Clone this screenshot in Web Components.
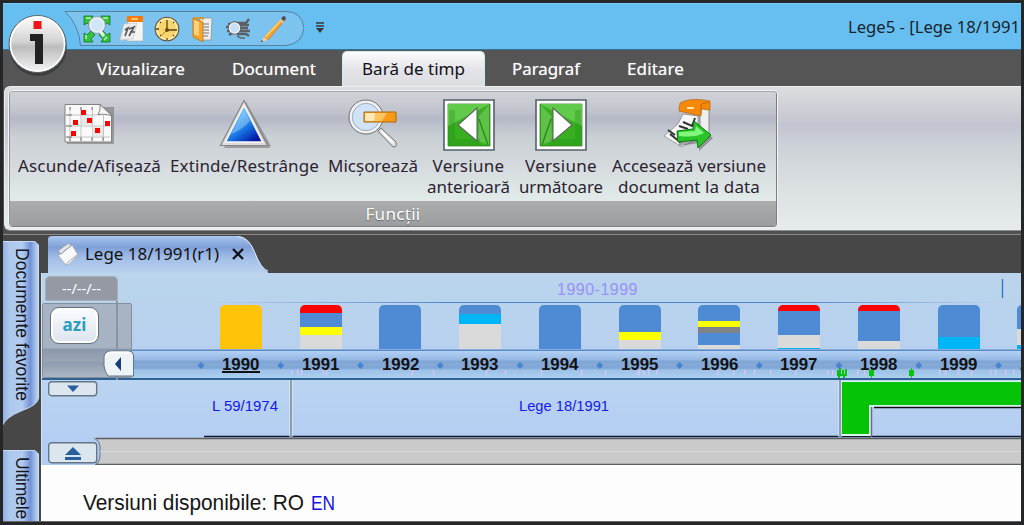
<!DOCTYPE html>
<html lang="ro">
<head>
<meta charset="utf-8">
<title>Lege5</title>
<style>
html,body{margin:0;height:100%;overflow:hidden;background:#222}
body{font-family:"Noto Sans","Open Sans",sans-serif}
</style>
</head>
<body>
<app-window></app-window>
<script>
const define=(name,html,after)=>customElements.define(name,class extends HTMLElement{
  connectedCallback(){
    if(this.shadowRoot)return;
    const t=document.createElement('template');
    t.innerHTML=typeof html==='function'?html(this):html;
    this.attachShadow({mode:'open'}).append(t.content.cloneNode(true));
    if(after)after(this);
  }
});

/* Label that takes up the given length: a short text is tracked out, a long one is condensed. */
define('fit-label',`<style>:host{display:block;white-space:pre;line-height:inherit}span{display:inline-block;transform-origin:0 0}</style><span><slot></slot></span>`,el=>{
  const s=el.shadowRoot.querySelector('span'),r=s.getBoundingClientRect(),w=+el.getAttribute('w'),v=el.hasAttribute('vertical');
  const len=v?r.height:r.width;
  if(len>w&&!v){
    s.style.transform=`scaleX(${(w/len).toFixed(4)})`;
    el.style.width=w+'px';
  }else s.style.letterSpacing=((w-len)/el.textContent.length).toFixed(3)+'px';
});

const ICONS={
fit:[26,26,`<g stroke="#0a6a12" stroke-width=".7"><path fill="#35c23c" d="M0 0h9l-2 3 4 4-4 4-4-4-3 2zM26 0h-9l2 3-4 4 4 4 4-4 3 2zM0 26h9l-2-3 4-4-4-4-4 4-3-2zM26 26h-9l2-3-4-4 4-4 4 4 3-2z"/></g><path d="M2 2h5M19 2h5M2 19v4M20 24l3-3" stroke="#baf5b3" stroke-width="1.5"/><circle cx="13" cy="9" r="7.3" fill="#cfe5f8" stroke="#e7edf1" stroke-width="2.4"/><circle cx="13" cy="9" r="8.4" fill="none" stroke="#66747e" stroke-width=".6"/><path d="M16 15l4 5" stroke="#eee" stroke-width="3"/>`],
cal:[26,26,`<path d="M9 5h15v20H8z" fill="#f5f5f5" stroke="#b5b5b5" stroke-width=".7"/><path fill="#f47b0a" d="M8 0h16v6H8z"/><path d="M12 3h7" stroke="#fff2b8" stroke-width="1.2"/><path d="M5 8l13-1-4 16-13 1z" fill="#ececec" stroke="#c8c8c8" stroke-width=".7"/><path d="M6 14l3-2-3 8M10 13l5-2-5 9M11 16h5" fill="none" stroke="#555" stroke-width="1.6"/>`],
clock:[26,26,`<circle cx="13" cy="13" r="11.8" fill="#f9d56e" stroke="#5f5540" stroke-width="1.1"/><circle cx="13" cy="13" r="10" fill="none" stroke="#fce9a9" stroke-width="1.6"/><g stroke="#56431d" stroke-width="1.3"><path d="M13 4v11M13 14h10M13 22v2M2 13h3M6 6l1 1M20 6l-1 1M6 20l1-1M20 20l-1-1"/></g><path d="M13 14l-6 6" stroke="#c08b28"/><circle cx="13" cy="14" r="2" fill="#694a0c"/>`],
folder:[26,26,`<g transform="translate(3 1)"><path d="M7 1h12l-1 22H7z" fill="#eee" stroke="#8b8b8b" stroke-width=".7"/><path d="M9 7h7M9 10h7M9 13h7M9 16h7M9 19h6" stroke="#777" stroke-width="1"/><path fill="#f6a42c" stroke="#bb6e0a" stroke-width=".7" d="M0 1l10 4v20L0 20z"/><path d="M1 3l5 2v14l-5-2z" fill="#fbd17a"/><path d="M0 1h10v2" stroke="#e98a0e" fill="none" stroke-width="1.5"/></g>`],
search:[26,26,`<path d="M1 11h7M3 8h5M2 15h6M4 19l5-3M8 7h13l3-4M14 9h10M15 12h8M15 15h10M12 18h9l3 2" stroke="#5d6062" stroke-width="2.4" fill="none"/><path d="M12 20l4 2h4" stroke="#666" stroke-width="1.4" fill="none"/><circle cx="9.500" cy="12" r="5.200" fill="#c9e0f4" stroke="#eceeee" stroke-width="1.600"/><circle cx="9.500" cy="12" r="6.300" fill="none" stroke="#55595c" stroke-width=".8"/>`],
pencil:[28,28,`<path d="M4 22L22 3l3 2L8 25z" fill="#f7a72e" stroke="#c27513" stroke-width=".7"/><path d="M5 22L22 4" stroke="#fddb8d" stroke-width="1.400"/><path d="M4 22L1 27l7-2z" fill="#eccfa2"/><path d="M1 27l1-2 1 1.500z" fill="#222"/><path d="M21 4l2-3q3 0 3 3l-2 2z" fill="#49545c"/><path d="M20 5l4 3" stroke="#cfcfcf" stroke-width="1.500"/>`],
sheet:[52,52,`<g transform="translate(-1 0)"><path d="M4 8H51V45H4z" fill="#666" opacity=".5"/><path d="M2 5.500h35l11.500 10.500v27H2z" fill="#fafafa" stroke="#828282"/><path d="M7 8v34M18 8v34M29.500 8v34M40.500 16v26M4 16h34M4 27h43M4 38h43" stroke="#c4c4c4" stroke-width="1"/><path d="M7 8v3M18 8v3M29 8v3M7 38v4M18 38v4M29 38v4M40 38v4M3 16h6M3 27h6M3 38h6" stroke="#777" stroke-width="1"/><path d="M18 16h11v11H18zM29 27h11v11H29z" fill="#ddd" opacity=".6"/><path d="M37 5.500q1 6-2 10 5-1 13.500 1z" fill="#f4f4f4" stroke="#777" stroke-width=".9"/><path fill="#f00" d="M18 11h5v5h-5zM10 21h5v5h-5zM24 19h5v5h-5zM42 22h5v5h-5zM32 29h5v5h-5zM8 32h5v5H8z"/></g>`],
triangle:[52,52,`<defs><linearGradient id="a" x2=".7" y2="1"><stop stop-color="#a5ddff"/><stop offset=".4" stop-color="#4ba9f8"/><stop offset=".7" stop-color="#166fe0"/><stop offset="1" stop-color="#0519a6"/></linearGradient></defs><g transform="translate(-1 0)"><path d="M28 3L53 47l-2 2H6z" fill="#666" opacity=".5"/><path d="M26 1.500L49.500 46.500H2.500z" fill="#dcdcdc" stroke="#858585" stroke-width="1.200"/><path d="M26 6.500L44.500 43h-37z" fill="url(#a)" stroke="#f6f6f6" stroke-width="1.500"/><path d="M26 10l6 12q-8 9-19 13z" fill="#b7e2ff" opacity=".4"/></g>`],
minus:[52,52,`<path d="M31 32l3-3 15 14q2 5-3 5z" fill="#ddd" stroke="#777"/><path d="M34 32l12 12" stroke="#fff" stroke-width="2"/><circle cx="19" cy="18" r="15.500" fill="#cfe2f8" stroke="#f1f1f1" stroke-width="3"/><circle cx="19" cy="18" r="17" fill="none" stroke="#6c7175"/><circle cx="19" cy="18" r="13.700" fill="none" stroke="#8d979e" stroke-width=".7"/><path d="M17 13h32v10H17z" fill="#f89a18" stroke="#ad680d"/><path d="M18 14h18l-4 8H18z" fill="#ffe9b6"/><path d="M28 14h12l-5 8h-8z" fill="#ffc560"/>`],
prev:[52,52,`<path fill="#fff" stroke="#536168" stroke-width="1.600" d="M1 1h50v50H1z"/><path fill="#38af20" stroke="#227313" stroke-width=".7" d="M5 5h42v42H5z"/><path d="M5 5h42L5 27z" fill="#62ca4b"/><path d="M36 17l10-11v40L35 42z" fill="#70c75d" opacity=".7"/><path d="M9 11v32h28" stroke="#228b16" stroke-width="6" fill="none" opacity=".3"/><path d="M36 20l9 26" stroke="#288d17" stroke-width="1.400"/><path d="M34 9v33L15 26z" fill="#fff" stroke="#59685b" stroke-width="1.100"/>`],
goto:[52,52,`<path d="M20 15l-5 10L1 37l18 11 16-9V17z" fill="#f7f7f7" stroke="#8c8c8c" stroke-width=".8"/><path d="M40 6h6v32h-9V11" fill="#eee" stroke="#777" stroke-width=".8"/><path fill="#f68a08" stroke="#b56208" stroke-width=".7" d="M17 4q10-6 30-2v9l-9-1v7L16 12z"/><path d="M38 5v10M39 5l7-2" stroke="#c66305"/><path d="M24 9h7" stroke="#ffe6a0" stroke-width="2"/><path d="M16 27l9 3M20 23l9 4 3-8M7 35l10 8 4-3M5 31l7 5" stroke="#333" stroke-width="2" fill="none"/><path d="M16 35q8-2 16-2v-9l18 15-14 13v-8l-20 3z" fill="#555" opacity=".5"/><path d="M14 32q8-1 16-2l1-8 17 14-13 13-1-8-19 2z" fill="#28c42a" stroke="#087e11"/><path d="M16 33l16-1 1-5 8 7q-9 5-25 3z" fill="#84f77d"/>`],
page:[22,26,`<path d="M4 13L15 4l6 10-10 10-3-1L1 14z" fill="#f9f9f9" stroke="#a5a9b3" stroke-width=".8"/><path d="M1 10Q7 5 12 2l2 3Q9 8 4 13z" fill="#e6e6e6" stroke="#8b9098" stroke-width=".8"/><path d="M9 24l2-3 9-7" stroke="#aaa" fill="none"/>`]
};
define('ui-icon',el=>{
  const [w,h,d]=ICONS[el.getAttribute('name')];
  return `<style>:host{display:block;flex:none;width:${w}px;height:${h}px}:host([flip]){transform:scaleX(-1)}svg{display:block;overflow:visible}</style><svg width="${w}" height="${h}" viewBox="0 0 ${w} ${h}">${d}</svg>`});

define('quick-bar',`<style>
:host{display:flex;align-items:center;position:relative;width:240px;height:35px;box-sizing:border-box;padding:0 16px 0 20px;justify-content:space-between}
.bg{position:absolute;inset:0;z-index:-1}
</style><svg class="bg" width="240" height="36" viewBox="0 0 240 36"><path d="M1 .5H222Q238 .5 240 17 238 33 222 34.500H16.500Q15 14 1 .5z" fill="#7cc3f0" stroke="#56809c"/></svg>
<ui-icon name="fit"></ui-icon><ui-icon name="cal"></ui-icon><ui-icon name="clock"></ui-icon><ui-icon name="folder"></ui-icon><ui-icon name="search"></ui-icon><ui-icon name="pencil"></ui-icon>`);

define('title-bar',`<style>
:host{display:flex;height:47px;background:#67bff1;border-bottom:1px solid #347296;box-sizing:border-box;border-top:1px solid #79ceff;isolation:isolate;overflow:hidden}
quick-bar{margin:7px 0 0 61px}
.more{margin:18px 0 0 12px}
fit-label{margin:7px 0 0 524px;font-size:17px;line-height:32px;color:#16242c;flex:none}
</style><quick-bar></quick-bar><svg class="more" width="8" height="12"><path d="M0 1h8M0 4h8" stroke="#35393b" stroke-width="1.500"/><path d="M0 6h8L4 11z" fill="#35393b"/></svg><fit-label w="172">Lege5 - [Lege 18/1991</fit-label>`);

define('app-button',`<style>:host{position:absolute;left:3px;top:10px;z-index:3}svg{display:block}</style>
<svg width="64" height="66"><defs><linearGradient id="g" x2="0" y2="1"><stop stop-color="#fff"/><stop offset=".45" stop-color="#d4d4d5"/><stop offset=".55" stop-color="#bcbcbd"/><stop offset="1" stop-color="#f6f6f6"/></linearGradient></defs><circle cx="32" cy="34" r="29" fill="#222" opacity=".45"/><circle cx="31.500" cy="31" r="28.500" fill="url(#g)" stroke="#555d61"/><circle cx="31.500" cy="31" r="27" fill="none" stroke="#fff" stroke-width="1.500"/><path d="M27.500 8h8v8h-8z" fill="#ed1515"/><path d="M24 21h13v30h-8V28h-5z" fill="#222"/></svg>`);

define('ribbon-tab',`<style>
:host{display:block;padding:1px 10px 0;height:35px;line-height:34px;font-size:17px;color:#fff;box-sizing:border-box;text-shadow:0 0 1px #bbb}
:host([active]){margin:0 -10px 0 -11px;padding:0 19px;color:#111;border:1px solid #c9eef2;border-bottom:0;border-radius:5px 5px 0 0;background:linear-gradient(#fcfcfd,#e2e2e9 55%,#dddee1);text-shadow:none;height:35px;position:relative;z-index:1}
</style><slot></slot>`);
define('ribbon-tabs',`<style>:host{display:flex;align-items:flex-end;height:36px;background:#555;padding-left:84px;gap:27px}</style>
<ribbon-tab><fit-label w="88">Vizualizare</fit-label></ribbon-tab><ribbon-tab><fit-label w="84">Document</fit-label></ribbon-tab><ribbon-tab active><fit-label w="103">Bară de timp</fit-label></ribbon-tab><ribbon-tab><fit-label w="68">Paragraf</fit-label></ribbon-tab><ribbon-tab><fit-label w="57">Editare</fit-label></ribbon-tab>`);

define('ribbon-button',`<style>:host{display:flex;flex-direction:column;align-items:center;font-size:17px;line-height:21px;color:#2b2330}.t{margin-top:4px;display:flex;flex-direction:column;align-items:center}</style><slot name="icon"></slot><div class="t"><slot></slot></div>`);
define('ribbon-group',`<style>
:host{display:flex;flex-direction:column;width:768px;height:136px;box-sizing:border-box;border:1px solid #777c80;border-top-color:#a3a6ac;border-left-color:#90949a;border-radius:4px;box-shadow:0 0 0 1px #f3f5f6;overflow:hidden}
.b{flex:1;display:flex;gap:9px;padding:7px 0 0 8px;background:linear-gradient(#d1d2d8,#c3c5ce 17%,#b5b8c6 24%,#bdc1cc 30%,#cbd0d5 42%,#d4d9dd 65%,#e2ebea 100%)}
.f{height:25px;flex:none;background:linear-gradient(#aaadad,#9b9d9e);display:flex;justify-content:center;color:#fff;font-size:17px;line-height:25px;text-shadow:0 1px 1px #666}
</style><div class="b"><slot></slot></div><div class="f"><fit-label w="55">Funcţii</fit-label></div>`);
define('ribbon-panel',`<style>
:host{display:block;height:144px;box-sizing:border-box;margin:0 0 0 1px;padding:4px 0 0 4px;border-radius:6px 0 0 6px;border:1px solid #eceeee;border-right:0;background:linear-gradient(#dcdde0,#cacbd3 20%,#c2c5d1 27%,#cdd2d8 43%,#d9dfe1 67%,#e6eceb);box-shadow:0 1px 0 #8b8e90}
</style><ribbon-group>
<ribbon-button><ui-icon slot="icon" name="sheet"></ui-icon><fit-label w="143">Ascunde/Afişează</fit-label></ribbon-button>
<ribbon-button><ui-icon slot="icon" name="triangle"></ui-icon><fit-label w="149">Extinde/Restrânge</fit-label></ribbon-button>
<ribbon-button><ui-icon slot="icon" name="minus"></ui-icon><fit-label w="90">Micşorează</fit-label></ribbon-button>
<ribbon-button><ui-icon slot="icon" name="prev"></ui-icon><fit-label w="72">Versiune</fit-label><fit-label w="83">anterioară</fit-label></ribbon-button>
<ribbon-button><ui-icon slot="icon" name="prev" flip></ui-icon><fit-label w="72">Versiune</fit-label><fit-label w="84">următoare</fit-label></ribbon-button>
<ribbon-button><ui-icon slot="icon" name="goto"></ui-icon><fit-label w="154">Accesează versiune</fit-label><fit-label w="142">document la data</fit-label></ribbon-button>
</ribbon-group>`);

define('side-tab',el=>`<style>
:host{display:block;position:relative;width:38px;height:${el.getAttribute('h')}px;flex:none;overflow:hidden;isolation:isolate}
svg{position:absolute;inset:0;z-index:-1}
.t{writing-mode:vertical-rl;padding-top:${el.getAttribute('pad')}px;margin-left:8px;font:17.5px/22px "Liberation Sans",Arial,sans-serif;color:#15171e;width:22px}
</style><svg width="38" height="${el.getAttribute('h')}"><defs><linearGradient id="s"><stop stop-color="#8dace0"/><stop offset=".2" stop-color="#adc8ed"/><stop offset=".55" stop-color="#b2cdf0"/><stop offset=".78" stop-color="#7492d5"/><stop offset=".85" stop-color="#8dabe1"/><stop offset="1" stop-color="#c2d9f2"/></linearGradient></defs><path d="${el.getAttribute('shape')}" fill="url(#s)" stroke="#c7dcf2"/></svg><div class="t"><slot></slot></div>`);
define('side-bar',`<style>:host{display:flex;flex-direction:column;width:38px;flex:none;background:#474747;padding-top:6px;gap:23px;box-sizing:border-box;overflow:hidden}</style>
<side-tab h="186" pad="7" shape="M-1 .5H32L35.500 4V157Q35 164 18 170 3 176-1 185z"><fit-label vertical w="153">Documente favorite</fit-label></side-tab>
<side-tab h="80" pad="7" shape="M-1 .5H32L35.500 4V90H-1z"><fit-label vertical w="62">Ultimele</fit-label></side-tab>`);

define('doc-tabs',`<style>
:host{display:block;height:38px;background:#474747}
.tab{display:flex;position:relative;isolation:isolate;width:222px;height:38px;margin-left:7px;align-items:center;box-sizing:border-box;padding-left:9px}
.bg{position:absolute;left:0;top:0;z-index:-1}
fit-label{font:17px/34px "Noto Sans",sans-serif;color:#111;margin-left:6px}
.x{margin-left:13px}
</style><div class="tab"><svg class="bg" width="222" height="38"><defs><linearGradient id="t" x2="0" y2="1"><stop stop-color="#a8c6ef"/><stop offset=".18" stop-color="#8fafe0"/><stop offset=".3" stop-color="#7f9fd8"/><stop offset=".6" stop-color="#a3bfe8"/><stop offset="1" stop-color="#bad2ee"/></linearGradient></defs><path d="M0 38V4Q0 1 4 1H190Q201 2 207 18 214 34 220 37v1z" fill="url(#t)"/><path d="M190 1.500Q201 2 207 18 213 34 220 36" fill="none" stroke="#dfecfa"/></svg><ui-icon name="page"></ui-icon><fit-label w="134">Lege 18/1991(r1)</fit-label><svg class="x" width="13" height="12"><path d="M1 1l10 10M11 1L1 11" stroke="#101218" stroke-width="2.300"/></svg></div>`);

define('date-panel',`<style>
:host{display:block;position:relative;width:93px;height:107px;flex:none}
.d{margin:3px 0 0 3px;width:73px;height:25px;border-radius:5px 5px 2px 2px;background:#9499a3;border:1px solid #a5adb9;box-sizing:border-box;color:#fff;font-size:15px;line-height:22px;display:flex;justify-content:center}
.p{margin-top:2px;margin-left:0;width:90px;height:75px;box-sizing:border-box;border:1px solid #858e99;border-radius:2px;background:linear-gradient(#a8b4c4,#a6b3c3 60%,#8b99ad 62%,#9aa5b4 78%,#8e9caf 80%,#acb6c2)}
.a{margin:3px 0 0 7px;width:49px;height:37px;box-sizing:border-box;border:1px solid #65717f;border-radius:9px;box-shadow:inset 0 0 0 2px #fff;background:linear-gradient(#fafcfe,#dde4ed);color:#2b9dc3;font-weight:bold;font-size:17px;line-height:34px;display:flex;justify-content:center}
.v{position:absolute;left:74px;top:28px;width:2px;height:79px;background:#8b939e}
.k{position:absolute;left:61px;top:77px}
</style><div class="d"><fit-label w="39">--/--/--</fit-label></div><div class="p"><div class="a"><fit-label w="24">azi</fit-label></div></div><div class="v"></div><svg class="k" width="32" height="27"><path d="M1 7Q2 1 8 1H26Q30 1 30.500 5V26H5Q2 22 1 16z" fill="#eef3f8" stroke="#647583"/><path d="M2.500 7Q4 3 8 2.500H26" fill="none" stroke="#fff" stroke-width="2"/><path d="M12 14l6-7v14z" fill="#173b7c"/></svg>`);

define('year-column',el=>{
  const bar=el.getAttribute('bar').split(' ').map(s=>s.split(':'));
  return `<style>
:host{display:flex;flex-direction:column;align-items:center;width:79.75px;flex:none;height:77px}
.bar{width:42px;height:44px;border-radius:5px 5px 0 0;overflow:hidden;display:flex;flex-direction:column;margin-top:2px}
.bar i{display:block;flex:none}
.l{margin-top:5px;font:bold 17px/21px "Liberation Sans",Arial,sans-serif;color:#111;height:17px}
.l.u{border-bottom:2px solid #111}
</style><div class="bar">${bar.map(([c,h])=>`<i style="background:${c};height:${h}px"></i>`).join('')}</div><div class="l ${el.hasAttribute('current')?'u':''}"><fit-label w="37.5">${el.getAttribute('year')}</fit-label></div>`});

const B='#4f8ad5',G='#dadada',R='#f00',Y='#ff0',C='#00b5f5';
const YEARS=[[1990,'#ffc409:44'],[1991,`${R}:8 ${B}:14 ${Y}:8 ${G}:14`],[1992,B+':44'],[1993,`${B}:9 ${C}:10 ${G}:25`],[1994,B+':44'],[1995,`${B}:27 ${Y}:8 ${G}:9`],[1996,`${B}:16 ${Y}:6 #808285:6 ${B}:12 ${G}:4`],[1997,`${R}:6 ${B}:24 ${G}:13 ${C}:1`],[1998,`${R}:6 ${B}:30 ${G}:8`],[1999,`${B}:32 ${C}:12`],[2000,`${B}:24 ${G}:16 ${C}:4`]];
const TICKS=[248,291,297,301,323,326,412,433,486,505,541,581,605,637,639,643,648,656,717,733,744,754,770,795,827,832,846,857,864,939,945,958,971,990,995,1005,1013];
define('year-scale',`<style>
:host{display:block;position:relative;flex:1;min-width:0;height:107px;overflow:hidden}
.dec{height:28px;display:flex;padding-left:422px;font:16px/33px "Liberation Sans",Arial,sans-serif;color:#9990f8}
.years{display:flex;margin:2px 0 0 66px;position:relative;z-index:1}
svg{position:absolute;left:0;top:0}
</style><svg width="887" height="107" viewBox="135 273 887 107"><defs><linearGradient id="f" gradientUnits="userSpaceOnUse" x1="210" x2="995"><stop stop-color="#5086cd" stop-opacity="0"/><stop offset=".3" stop-color="#5086cd"/><stop offset=".75" stop-color="#5086cd"/><stop offset="1" stop-color="#5086cd" stop-opacity="0"/></linearGradient></defs><path fill="url(#f)" d="M210 302h785v1H210z"/><path d="M1002.500 279v19" stroke="#2e72c4" stroke-width="1.300"/>${YEARS.map((_,i)=>`<path d="M${201+i*79.75-3.5} 365.500l3.500-3.500 3.500 3.500-3.500 3.500z" fill="#4684d1"/>`).join('')}<path d="${TICKS.map(x=>`M${x} 370h1.300v5h-1.300z`).join('')}" fill="#ddc3f6"/><path fill="#06c30b" d="M837 370h2v-2h2v6h1v-4h2v4h1v-5h2v7h-2v2h-2v-2h-3v2h-2v-2h-1zM869 370h2v-2h1v2h2v6h-2v2h-1v-2h-2zM909 370h2v-2h1v2h2v6h-2v2h-1v-2h-2z"/></svg>
<div class="dec"><fit-label w="81">1990-1999</fit-label></div><div class="years">${YEARS.map(([y,b],i)=>`<year-column year="${y}" bar="${b}" ${i?'':'current'}></year-column>`).join('')}</div>`);

define('version-track',`<style>
:host{display:flex;position:relative;isolation:isolate;height:85px;overflow:hidden;background:linear-gradient(#bad4f1,#b2cbf3)}
.bg{position:absolute;left:0;top:0;z-index:-1}
.n{display:flex;flex-direction:column;width:57px;margin-left:6px;flex:none;gap:45px;padding-top:1px}
.n svg{display:block}
.v{font:15px/20px "Liberation Sans",Arial,sans-serif;color:#1518e8;display:flex;justify-content:center;padding-top:16px;box-sizing:border-box;flex:none}
</style><svg class="bg" width="980" height="85" viewBox="42 380 980 85"><path d="M98 438h924v27H94q6-3 6-10v-8q0-7-4-10z" fill="#cacaca"/><path d="M96 438.500h926M96 464.500h926" stroke="#5b5e62" stroke-width="1.500"/><path d="M94 438q6 3 6 8v9q0 7-5 10" fill="none" stroke="#687079"/><path d="M100 451.500h922" stroke="#d9d9d9"/><path d="M204 436.500h818" stroke="#111a2a" stroke-width="1.500"/><path d="M291 380v57M840 380v57" stroke="#e3efff" stroke-width="3"/><path d="M291 380v57M840 380v57" stroke="#77838b" stroke-width="1.500"/><path d="M842 381h180v26H871v29h-29z" fill="#dcf6ef"/><path d="M842 382h180v23H869v29h-27z" fill="#05c407"/><path d="M871.500 407v30" stroke="#66727b" stroke-width="1.500"/><path d="M874 407.500h148" stroke="#111" stroke-width="1.500"/></svg>
<div class="n"><svg width="50" height="16"><rect x=".7" y=".7" width="48" height="14" rx="3" fill="#dce6ef" stroke="#657786" stroke-width="1.400"/><path d="M19 4.500h12l-6 6.500z" fill="#27609c"/></svg><svg width="50" height="22"><rect x=".7" y=".7" width="48" height="20" rx="3" fill="#dce6ef" stroke="#657786" stroke-width="1.400"/><path d="M17 13l8-8 8 8zM17 15h16v3H17z" fill="#27609c"/></svg></div>
<div class="v" style="width:66px;margin-left:107px"><fit-label w="66">L 59/1974</fit-label></div><div class="v" style="width:90px;margin-left:241px"><fit-label w="90">Lege 18/1991</fit-label></div>`);

define('time-line',`<style>
:host{display:block;border-left:1px solid #d5e3f2}
.top{display:flex;height:107px;background:linear-gradient(#bad5ec,#b7d0ef 76px,#5a89c8 77px,#5a89c8 78px,#b4d1f5 78px,#94b7e4 87px,#7ea5d4 88px,#86aad7 92px,#7ea5d5 95px,#9dc1e8 97px,#acd0ee 105px,#2d6294 105px)}
</style><div class="top"><date-panel></date-panel><year-scale></year-scale></div><version-track></version-track>`);

define('doc-page',`<style>:host{display:flex;gap:7px;padding:26px 0 0 42px;background:#fdfdfd;font:22px/24px "Liberation Sans",Arial,sans-serif;color:#151515;flex:1}.en{color:#1014e0;font-size:20.5px}</style><fit-label w="221">Versiuni disponibile: RO</fit-label><fit-label class="en" w="24">EN</fit-label>`);

define('app-window',`<style>
:host{display:flex;flex-direction:column;width:1024px;height:525px;box-sizing:border-box;border:3px solid #242628;background:#505050;overflow:hidden;position:relative}
.work{display:flex;flex:1;min-height:0;margin-top:4px;border-top:1px solid #898989;border-bottom:1px solid #666}
.main{display:flex;flex-direction:column;width:981px;flex:none}
</style><app-button></app-button><title-bar></title-bar><ribbon-tabs></ribbon-tabs><ribbon-panel></ribbon-panel>
<div class="work"><side-bar></side-bar><div class="main"><doc-tabs></doc-tabs><time-line></time-line><doc-page></doc-page></div></div>`);
</script>
</body>
</html>
